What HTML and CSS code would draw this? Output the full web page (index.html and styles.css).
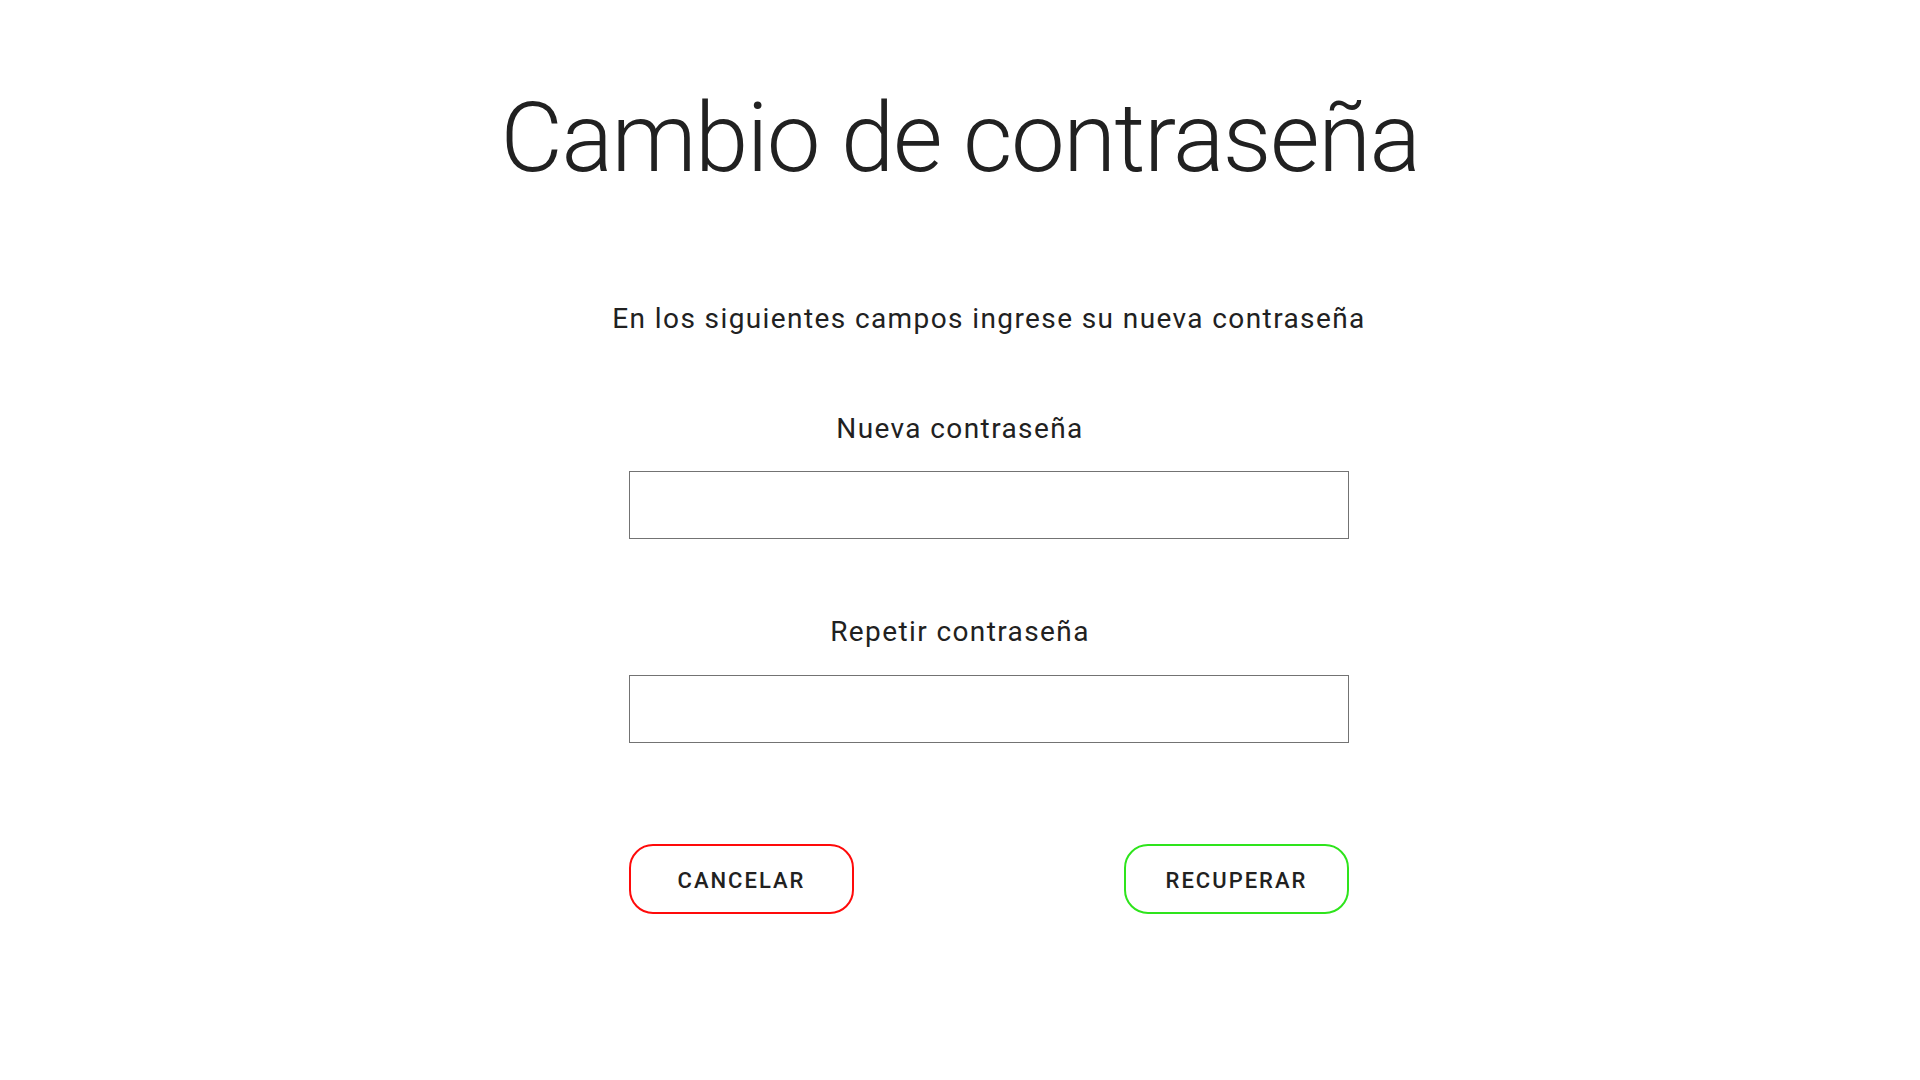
FILE: index.html
```html
<!DOCTYPE html>
<html lang="es">
<head>
<meta charset="utf-8">
<title>Cambio de contraseña</title>
<link rel="stylesheet" href="styles.css">
</head>
<body>
<main class="page">
  <h1 class="title">Cambio de contraseña</h1>
  <form class="form">
    <p class="subtitle">En los siguientes campos ingrese su nueva contraseña</p>
    <label class="label" for="pass1">Nueva contraseña</label>
    <input class="field" id="pass1" type="password">
    <label class="label" for="pass2">Repetir contraseña</label>
    <input class="field" id="pass2" type="password">
    <div class="actions">
      <button type="button" class="btn btn-cancel">CANCELAR</button>
      <button type="button" class="btn btn-ok">RECUPERAR</button>
    </div>
  </form>
</main>
</body>
</html>
```

FILE: styles.css
```css
* { box-sizing: border-box; }

html, body {
  margin: 0;
  padding: 0;
  background: #ffffff;
}

body {
  font-family: Roboto, "Liberation Sans", Arial, sans-serif;
  color: #212121;
}

.page {
  display: flex;
  flex-direction: column;
  align-items: center;
  padding-top: 81px;
}

.title {
  margin: 0;
  font-weight: 300;
  font-size: 96px;
  line-height: 1.2;
  letter-spacing: -1.5px;
  color: #212121;
}

.form {
  width: 778px;
  display: flex;
  flex-direction: column;
  align-items: flex-end;
  margin: 0;
}

.subtitle {
  width: 780px;
  align-self: center;
  margin: 106px 0 0 58px;
  font-size: 28px;
  line-height: 1.2;
  letter-spacing: 1.4px;
  text-align: center;
  font-weight: 400;
  white-space: nowrap;
}

.label {
  display: block;
  width: 100%;
  text-align: center;
  font-size: 28px;
  line-height: 1.2;
  letter-spacing: 1.4px;
  margin-top: 76px;
}

.field {
  display: block;
  width: 720px;
  height: 68px;
  margin-top: 26px;
  border: 1px solid #737373;
  border-radius: 0;
  background: #fff;
  font-size: 24px;
  padding: 0 16px;
  outline: none;
}

.actions {
  width: 720px;
  display: flex;
  justify-content: space-between;
  margin-top: 101px;
}

.btn {
  width: 225px;
  height: 70px;
  border-radius: 24px;
  background: #fff;
  font-family: Roboto, "Liberation Sans", Arial, sans-serif;
  font-weight: 500;
  font-size: 22px;
  letter-spacing: 2px;
  color: #212121;
  padding: 4px 0 0 0;
  cursor: pointer;
}

.btn-cancel {
  border: 2px solid #ff0a0a;
}

.btn-ok {
  border: 2px solid #2ee41c;
}
```
